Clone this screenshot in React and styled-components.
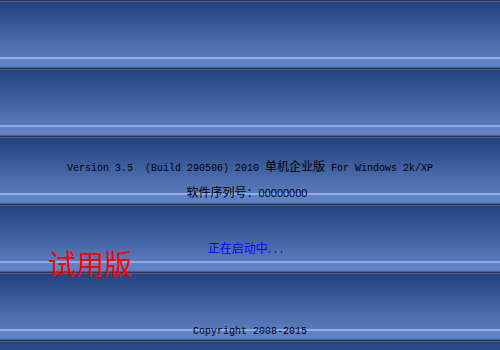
import React from 'react';
import styled, { createGlobalStyle } from 'styled-components';

const MONO = '"Liberation Mono","Noto Sans CJK SC",monospace';
const CJK = '"Noto Sans CJK SC","Liberation Sans",sans-serif';

const GlobalStyle = createGlobalStyle`
  html, body {
    margin: 0;
    padding: 0;
    width: 500px;
    height: 350px;
    overflow: hidden;
  }
`;

// the splash background: a 68px band repeated down the window
const Splash = styled.div`
  width: 500px;
  height: 350px;
  box-sizing: border-box;
  padding: 160px 0 12px;
  display: flex;
  flex-direction: column;
  align-items: center;
  background-color: #3a5a98;
  background-image: linear-gradient(
    to bottom,
    #244480 0px,
    #2f4f8d 14px,
    #5a7bbb 55px,
    #8eade5 55px,
    #8eade5 57px,
    #5f83c6 57px,
    #5c80c3 65px,
    #4c5d7e 65px,
    #4c5d7e 66px,
    #243558 66px,
    #243558 67px,
    #52638a 67px,
    #52638a 68px
  );
  background-size: 100% 68px;
  background-position: 0 2px;
  background-repeat: repeat-y;
`;

const VersionLine = styled.div`
  font-family: ${MONO};
  font-size: 10px;
  line-height: 12px;
  color: #000;
  white-space: pre;
`;

const Cjk = styled.span`
  font-family: ${CJK};
  font-size: 12px;
`;

const SerialLine = styled.div`
  margin-top: 10px;
  margin-right: 6px;
  font-family: ${CJK};
  font-size: 12px;
  line-height: 14px;
  color: #000;
  white-space: pre;
`;

const SerialNo = styled.span`
  font-family: "Liberation Sans", sans-serif;
  font-size: 11px;
`;

const Status = styled.div`
  margin-top: 42px;
  margin-right: 9px;
  font-family: ${CJK};
  font-size: 12px;
  line-height: 12px;
  color: #0000ff;
  white-space: pre;
`;

const Trial = styled.div`
  align-self: flex-start;
  margin-top: -5px;
  padding-left: 48px;
  font-family: ${CJK};
  font-size: 28px;
  line-height: 28px;
  color: #ff0000;
`;

const Copyright = styled.div`
  margin-top: auto;
  font-family: ${MONO};
  font-size: 10px;
  line-height: 12px;
  color: #000;
`;

export default function App() {
  return (
    <>
      <GlobalStyle />
      <Splash>
        <VersionLine>
          Version 3.5  (Build 290506) 2010 <Cjk>单机企业版</Cjk> For Windows 2k/XP
        </VersionLine>
        <SerialLine>
          软件序列号：<SerialNo>00000000</SerialNo>
        </SerialLine>
        <Status>正在启动中. . .</Status>
        <Trial>试用版</Trial>
        <Copyright>Copyright 2008-2015</Copyright>
      </Splash>
    </>
  );
}
